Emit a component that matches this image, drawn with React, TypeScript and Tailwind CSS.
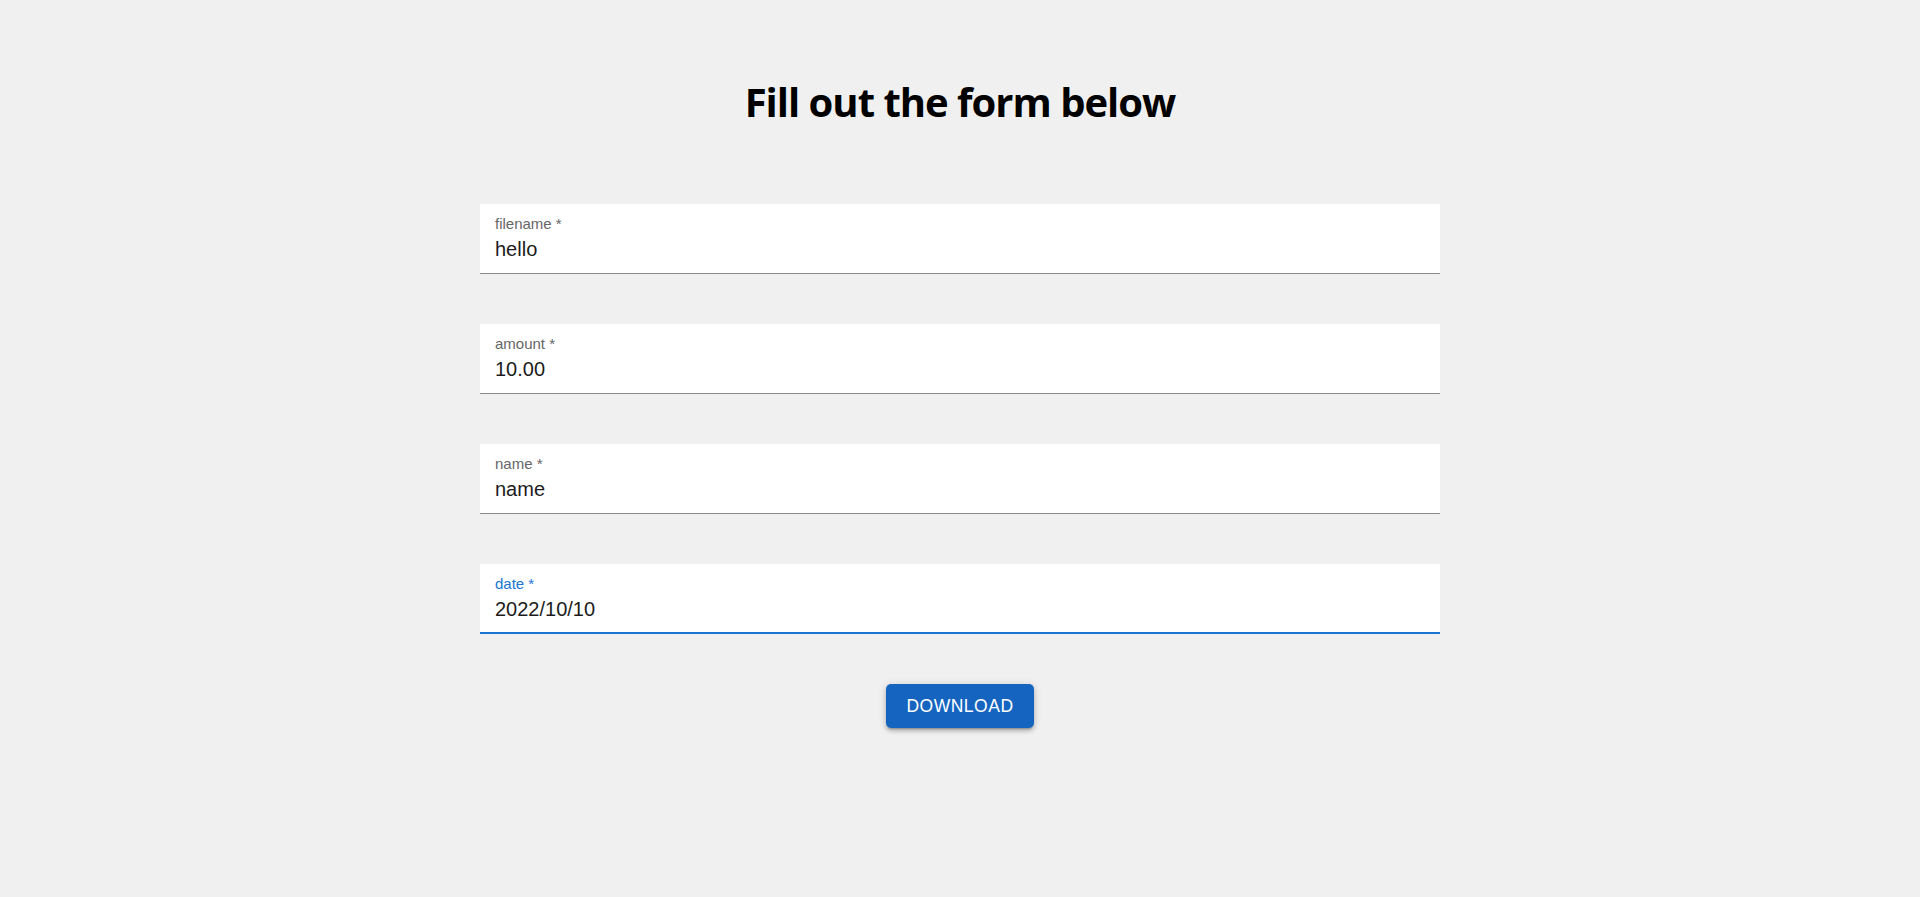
import { useState } from "react";

type Field = { id: string; label: string; value: string };

const initialFields: Field[] = [
  { id: "filename", label: "filename", value: "hello" },
  { id: "amount", label: "amount", value: "10.00" },
  { id: "name", label: "name", value: "name" },
  { id: "date", label: "date", value: "2022/10/10" },
];

export default function App() {
  const [fields, setFields] = useState(initialFields);
  const [focused, setFocused] = useState("date");

  const handleChange = (id: string, value: string) => {
    setFields(fields.map((f) => (f.id === id ? { ...f, value } : f)));
  };

  return (
    <div className="min-h-screen bg-[#f0f0f0] flex flex-col items-center">
      <h1 className="mt-[78px] text-[40px] leading-[48px] font-bold text-black font-['Open_Sans',sans-serif] tracking-[-1px]">
        Fill out the form below
      </h1>

      <form
        className="mt-[78px] w-[960px] flex flex-col gap-[50px]"
        onSubmit={(e) => e.preventDefault()}
      >
        {fields.map((f) => {
          const isFocused = focused === f.id;
          return (
            <div
              key={f.id}
              className={
                isFocused
                  ? "h-[70px] bg-white border-b-2 border-[#1976d2] px-[15px] pt-[11px] font-['Liberation_Sans',Arial,sans-serif]"
                  : "h-[70px] bg-white border-b border-[#8a8a8a] px-[15px] pt-[11px] font-['Liberation_Sans',Arial,sans-serif]"
              }
            >
              <label
                htmlFor={f.id}
                className={
                  isFocused
                    ? "block text-[15px] leading-[18px] text-[#1976d2]"
                    : "block text-[15px] leading-[18px] text-[#666666]"
                }
              >
                {f.label} *
              </label>
              <input
                id={f.id}
                value={f.value}
                onChange={(e) => handleChange(f.id, e.target.value)}
                onFocus={() => setFocused(f.id)}
                required
                className="mt-[4px] block w-full bg-transparent text-[20px] leading-[24px] text-[#1c1c1c] outline-none"
              />
            </div>
          );
        })}

        <div className="flex justify-center">
          <button
            type="submit"
            className="w-[148px] h-[44px] rounded-[5px] bg-[#1565c0] text-white text-[17.5px] font-medium tracking-[0.5px] uppercase font-['Liberation_Sans',Arial,sans-serif] shadow-[0_3px_2px_-2px_rgba(0,0,0,0.25),0_3px_4px_0_rgba(0,0,0,0.18),0_1px_8px_0_rgba(0,0,0,0.14)]"
          >
            Download
          </button>
        </div>
      </form>
    </div>
  );
}
